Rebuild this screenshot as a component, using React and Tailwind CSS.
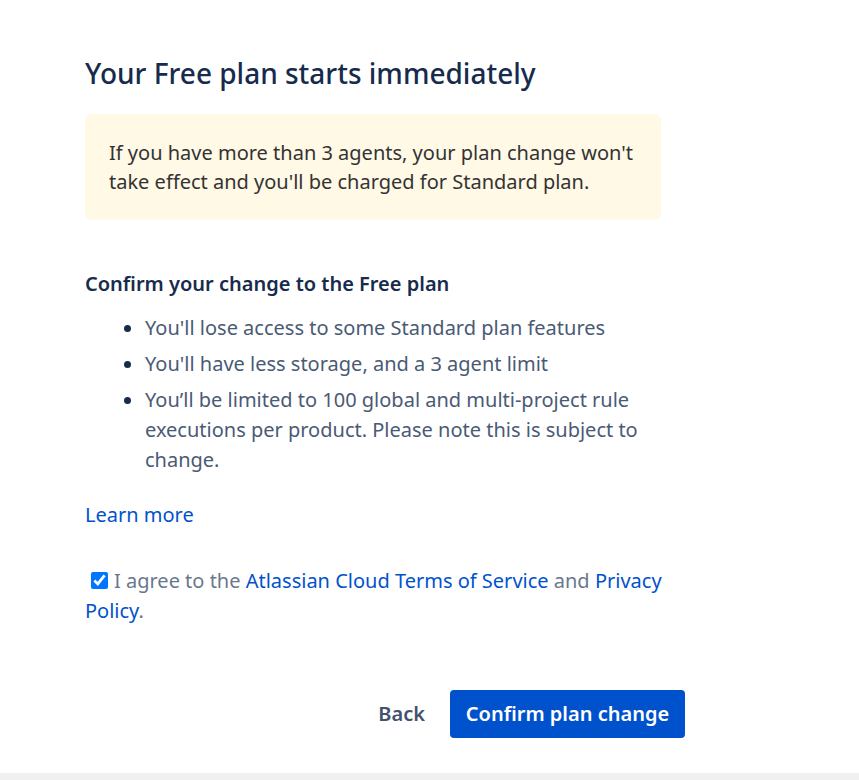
import { useState } from "react";

const bullets = [
  "You'll lose access to some Standard plan features",
  "You'll have less storage, and a 3 agent limit",
  "You\u2019ll be limited to 100 global and multi-project rule executions per product. Please note this is subject to change.",
];

export default function App() {
  const [agreed, setAgreed] = useState(true);

  return (
    <div className="min-h-screen bg-[#f0f0f0] font-['Segoe_UI','Noto_Sans',sans-serif]">
      <div className="bg-white h-[773px] pt-[57px] pl-[85px]">
        <div className="w-[600px]">
          <h1 className="text-[28px] leading-[32px] font-medium text-[#172B4D]">
            Your Free plan starts immediately
          </h1>

          {/* warning callout */}
          <div className="mt-[25px] w-[576px] rounded-[6px] bg-[#FFF9E6] px-[24px] py-[24px] text-[20px] leading-[29px] text-[#333333]">
            If you have more than 3 agents, your plan change won't take effect and you'll be charged for Standard plan.
          </div>

          <h2 className="mt-[50px] text-[20px] leading-[28px] font-semibold text-[#172B4D]">
            Confirm your change to the Free plan
          </h2>

          <ul className="mt-[15px] w-[560px] space-y-[6px] text-[20px] leading-[30px] text-[#4A5A75]">
            {bullets.map((b, i) => (
              <li key={i} className="flex items-start">
                <span className="flex h-[30px] w-[60px] items-center pl-[39px]">
                  <span className="block h-[7px] w-[7px] rounded-full bg-[#172B4D]" />
                </span>
                <span className="w-[500px]">{b}</span>
              </li>
            ))}
          </ul>

          <a href="#" className="mt-[26px] block text-[20px] leading-[28px] text-[#0052CC]">
            Learn more
          </a>

          <p className="mt-[37px] w-[590px] text-[20px] leading-[30px] text-[#6B778C]">
            <input
              type="checkbox"
              checked={agreed}
              onChange={() => setAgreed(!agreed)}
              className="ml-[6px] mr-[6px] h-[17px] w-[17px] align-[-1px] accent-[#0075FF]"
            />
            I agree to the <a href="#" className="text-[#0052CC]">Atlassian Cloud Terms of Service</a> and{" "}
            <a href="#" className="text-[#0052CC]">Privacy Policy</a>.
          </p>

          <div className="mt-[64px] flex items-center justify-end gap-[8px]">
            <button className="h-[48px] rounded-[4px] px-[17px] text-[20px] font-semibold text-[#42526E]">
              Back
            </button>
            <button className="h-[48px] w-[235px] rounded-[4px] bg-[#0052CC] text-[20px] font-semibold text-white">
              Confirm plan change
            </button>
          </div>
        </div>
      </div>
    </div>
  );
}
